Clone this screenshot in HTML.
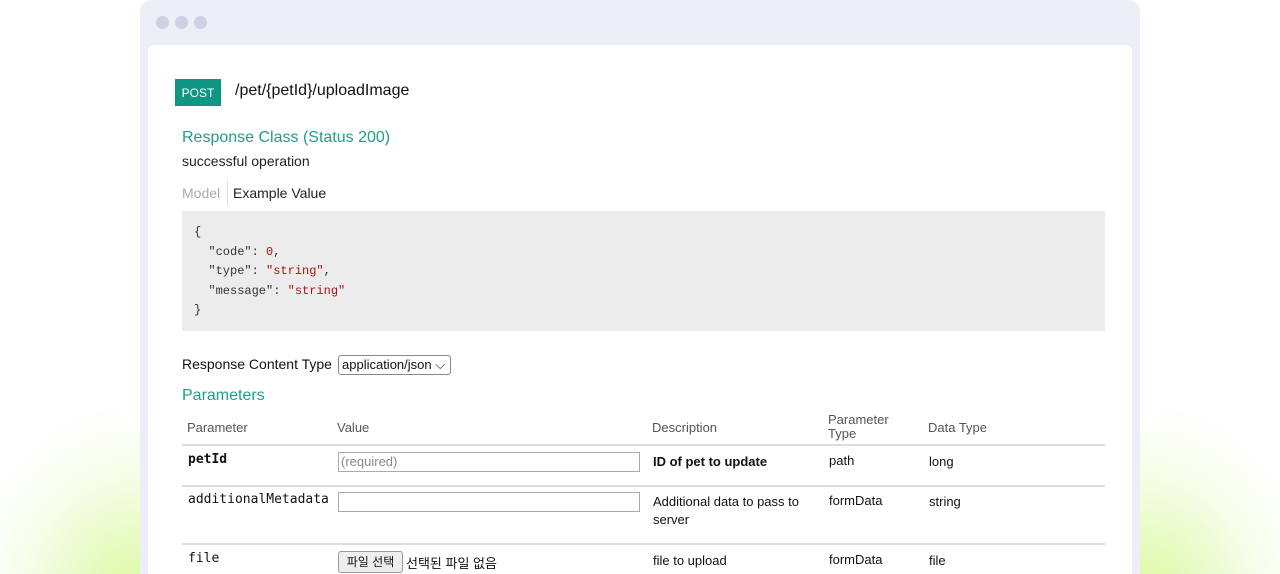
<!DOCTYPE html>
<html style="width:1280px;height:574px;overflow:hidden"><head><meta charset="utf-8"><style>
*{margin:0;padding:0;box-sizing:border-box}
body{width:1280px;height:574px;overflow:hidden;background:#fff;position:relative;font-family:"Liberation Sans","Noto Sans CJK KR",sans-serif;color:#111}
.glowL{position:absolute;left:-40px;top:400px;width:220px;height:260px;border-radius:50%;background:radial-gradient(ellipse at 80% 80%,rgba(200,245,110,.7),rgba(225,250,180,.3) 45%,rgba(255,255,255,0) 70%)}
.glowR{position:absolute;left:1100px;top:400px;width:220px;height:260px;border-radius:50%;background:radial-gradient(ellipse at 20% 80%,rgba(200,245,110,.7),rgba(225,250,180,.3) 45%,rgba(255,255,255,0) 70%)}
.frame{position:absolute;left:140px;top:0;width:1000px;height:574px;background:#eceff7;border-radius:12px 12px 0 0}
.dot{position:absolute;top:16px;width:13px;height:13px;border-radius:50%;background:#ccd2e3}
.panel{position:absolute;left:8px;top:45px;width:984px;height:529px;background:#fff;border-radius:6px 6px 0 0}
.a{position:absolute;white-space:nowrap}
.post{left:175px;top:79px;width:46px;height:27px;background:#0f9784;color:#fff;font-size:12px;line-height:28px;text-align:center}
.green{color:#1f9e8c}
.code{left:182px;top:211px;width:923px;height:120px;background:#ececec;font-family:"Liberation Mono",monospace;font-size:12px;line-height:19.5px;padding:12px 12px;color:#333;white-space:pre}
.r{color:#a11}
.mono{font-family:"DejaVu Sans Mono","Liberation Mono",monospace;font-size:13px}
.hd{font-size:13px;color:#555}
.line{position:absolute;left:182px;width:923px;height:2px;background:#ddd}
.inp{position:absolute;left:338px;width:302px;height:20px;border:1px solid #aaa;background:#fff;font-size:13px;color:#888;padding:1px 2px}
.sm{font-size:13px}
</style></head><body>
<div class="glowL"></div><div class="glowR"></div>
<div class="frame">
<div class="dot" style="left:16px"></div><div class="dot" style="left:35px"></div><div class="dot" style="left:54px"></div>
<div class="panel"></div>
</div>
<div class="a post">POST</div>
<div class="a" style="left:235px;top:82px;font-size:16px">/pet/{petId}/uploadImage</div>
<div class="a green" style="left:182px;top:129px;font-size:16px">Response Class (Status 200)</div>
<div class="a" style="left:182px;top:153px;font-size:14px;color:#222">successful operation</div>
<div class="a" style="left:182px;top:185px;font-size:14px;color:#aaa">Model</div>
<div class="a" style="left:227px;top:181px;width:1px;height:24px;background:#ddd"></div>
<div class="a" style="left:233px;top:185px;font-size:14px;color:#222">Example Value</div>
<div class="a code">{
  "code": <span class="r">0</span>,
  "type": <span class="r">"string"</span>,
  "message": <span class="r">"string"</span>
}</div>
<div class="a" style="left:182px;top:356px;font-size:14px">Response Content Type</div>
<div class="a" style="left:338px;top:355px;width:113px;height:20px;border:1px solid #888;border-radius:3px;font-size:13px;padding:1px 3px">application/json ⌵</div>
<div class="a green" style="left:182px;top:387px;font-size:16px">Parameters</div>
<div class="a hd" style="left:187px;top:420px">Parameter</div>
<div class="a hd" style="left:337px;top:420px">Value</div>
<div class="a hd" style="left:652px;top:420px">Description</div>
<div class="a hd" style="left:828px;top:413px;line-height:14px;white-space:normal;width:70px">Parameter Type</div>
<div class="a hd" style="left:928px;top:420px">Data Type</div>
<div class="line" style="top:444px"></div>
<div class="a mono" style="left:188px;top:452px;font-weight:bold">petId</div>
<div class="inp" style="top:452px">(required)</div>
<div class="a sm" style="left:653px;top:454px;font-weight:bold">ID of pet to update</div>
<div class="a sm" style="left:829px;top:453px">path</div>
<div class="a sm" style="left:929px;top:454px">long</div>
<div class="line" style="top:485px"></div>
<div class="a mono" style="left:188px;top:492px">additionalMetadata</div>
<div class="inp" style="top:492px"></div>
<div class="a sm" style="left:653px;top:493px;line-height:18px">Additional data to pass to<br>server</div>
<div class="a sm" style="left:829px;top:493px">formData</div>
<div class="a sm" style="left:929px;top:494px">string</div>
<div class="line" style="top:543px"></div>
<div class="a mono" style="left:188px;top:551px">file</div>
<div class="a" style="left:338px;top:551px;width:65px;height:22px;border:1px solid #999;border-radius:3px;background:#eee;font-size:12px;text-align:center;line-height:20px">파일 선택</div>
<div class="a" style="left:406px;top:553px;font-size:13px">선택된 파일 없음</div>
<div class="a sm" style="left:653px;top:553px">file to upload</div>
<div class="a sm" style="left:829px;top:552px">formData</div>
<div class="a sm" style="left:929px;top:553px">file</div>
</body></html>
